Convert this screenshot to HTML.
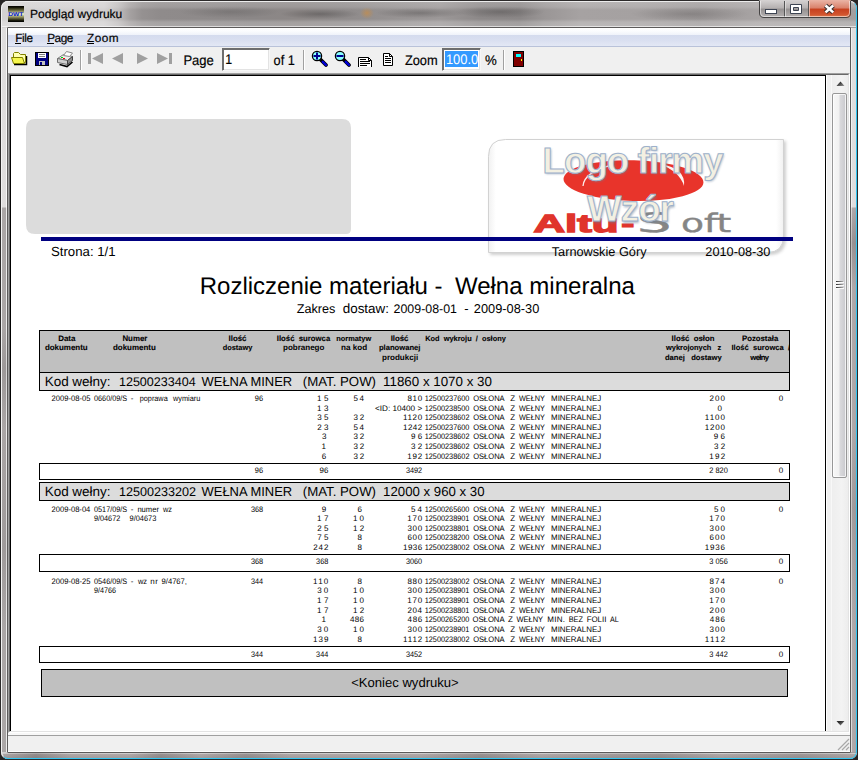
<!DOCTYPE html>
<html lang="pl"><head><meta charset="utf-8"><title>Podgląd wydruku</title>
<style>
html,body{margin:0;padding:0;width:858px;height:760px;overflow:hidden;background:#262424;font-family:"Liberation Sans",sans-serif}
div{position:absolute;box-sizing:border-box}
#win{left:0;top:0;width:858px;height:760px;border-radius:8px 8px 8px 8px;background:#2c2a2a}
#in{left:1px;top:1px;width:856px;height:758px;border-radius:7px;overflow:hidden;background:#c6c2c2}
#glass{left:-1px;top:-1px;width:858px;height:760px;
 background:
  linear-gradient(to bottom,rgba(255,255,255,0) 0px,rgba(255,255,255,0) 1px,rgba(255,255,255,.6) 1px,rgba(255,255,255,.6) 2px,rgba(255,255,255,.2) 2px,rgba(255,255,255,.14) 7px,rgba(255,255,255,0) 10px,rgba(255,255,255,0) 19px,rgba(255,255,255,.2) 22px,rgba(255,255,255,.24) 26px,rgba(255,255,255,.7) 26px,rgba(255,255,255,.7) 27px,rgba(255,255,255,0) 27px),
  radial-gradient(ellipse 7px 6px at 367px 13px,rgba(215,140,50,.55),rgba(215,140,50,0)),
  radial-gradient(ellipse 40px 5px at 320px 14px,rgba(50,48,48,.35),rgba(50,48,48,0)),
  radial-gradient(ellipse 45px 5px at 420px 13px,rgba(50,48,48,.3),rgba(50,48,48,0)),
  radial-gradient(ellipse 50px 6px at 230px 12px,rgba(60,58,58,.22),rgba(60,58,58,0)),
  radial-gradient(ellipse 45px 6px at 500px 12px,rgba(50,48,48,.3),rgba(50,48,48,0)),
  radial-gradient(ellipse 60px 7px at 690px 14px,rgba(70,66,66,.25),rgba(70,66,66,0)),
  linear-gradient(to right,#d3d1d1 0px,#d2d0d0 104px,#c0bdbd 118px,#a5a1a1 130px,#959191 142px,#8f8b8b 160px,#8e8a8a 200px,#8b8787 250px,#8c8786 300px,#8e8a8a 340px,#979393 400px,#9c9898 440px,#8c8888 480px,#8a8686 520px,#9a9696 545px,#a6a2a2 580px,#a5a1a1 640px,#9d9999 700px,#a8a4a4 760px,#a29e9e 858px)}
#frameL{left:0px;top:27px;width:6px;height:724px;background:linear-gradient(to bottom,rgba(255,255,255,.62) 0,rgba(255,255,255,.62) 179px,rgba(255,255,255,0) 180px,rgba(255,255,255,0) 300px,rgba(60,56,56,.12) 340px,rgba(255,255,255,0) 400px,rgba(60,56,56,.1) 520px,rgba(255,255,255,0) 600px),linear-gradient(to right,#f2f2f2 0,#f2f2f2 1px,#aca8a8 1px,#a8a4a4 5px,#ececec 5px)}
#frameR{left:850px;top:27px;width:6px;height:724px;background:linear-gradient(to bottom,rgba(255,255,255,.62) 0,rgba(255,255,255,.62) 179px,rgba(255,255,255,0) 180px,rgba(60,50,50,.2) 215px,rgba(255,255,255,0) 260px,rgba(255,255,255,0) 400px,rgba(60,56,56,.12) 480px,rgba(255,255,255,0) 600px),linear-gradient(to right,#dcdada 0,#dcdada 1px,#b2aaaa 1px,#aaa5a8 5px,#2fc5f2 5px)}
#frameB{left:0px;top:752px;width:856px;height:6px;background:linear-gradient(to right,rgba(60,56,56,0) 0,rgba(60,56,56,.25) 35px,rgba(60,56,56,0) 70px,rgba(60,56,56,0) 130px,rgba(60,56,56,.22) 160px,rgba(60,56,56,0) 200px,rgba(60,56,56,.2) 245px,rgba(60,56,56,0) 290px,rgba(60,56,56,0) 420px,rgba(60,56,56,.2) 480px,rgba(60,56,56,0) 540px,rgba(60,56,56,.18) 660px,rgba(60,56,56,0) 720px,rgba(60,56,56,.15) 800px,rgba(60,56,56,0) 856px),linear-gradient(to bottom,#cfcccc 0,#cfcccc 1px,#b0a9a9 1px,#a39c9c 5px,#2fc5f2 5px)}
#hl{left:0;top:0;width:856px;height:758px;border-radius:7px;border:1px solid rgba(255,255,255,.0);border-top-color:#ececec;border-left-color:#f2f2f2;border-right-color:#2fc5f2;border-bottom-color:#2fc5f2}
#cborder{left:7px;top:27px;width:844px;height:726px;border:1px solid #5c5a5a;border-radius:1px}
#client{left:8px;top:28px;width:842px;height:724px;background:#f0f0f0;overflow:hidden}
#menubar{left:0;top:0;width:842px;height:19px;background:linear-gradient(to bottom,#ffffff 0,#fbfcfe 3px,#eff2fa 7px,#d4dbee 7px,#d9dff0 12px,#e3e8f5 18px,#b9c2d9 18px,#b9c2d9 19px)}
#toolbar{left:0;top:19px;width:842px;height:26px;background:#f0f0f0}
#viewport{left:0;top:45px;width:842px;height:660px;background:#f0f0f0;border-top:1px solid #a0a0a0;border-left:1px solid #a0a0a0;border-right:1px solid #fff;border-bottom:1px solid #fff}
#vp2{left:0;top:0;width:840px;height:658px;border-top:1px solid #696969;border-left:1px solid #696969;border-right:1px solid #e3e3e3;border-bottom:1px solid #e3e3e3}
#page{left:0;top:0;width:816px;height:656px;background:#fff;border:1px solid #000;border-bottom:none}
#pgap{left:816px;top:0;width:6px;height:656px;background:linear-gradient(to right,#fff 0,#fff 1px,#f0f0f0 1px,#f0f0f0 5px,#f8f8f8 5px)}
#vscroll{left:822px;top:0;width:16px;height:656px;background:linear-gradient(to right,#eeeeee 0,#f1f1f1 40%,#f3f3f3 60%,#ededed 100%)}
#thumb{left:0px;top:18px;width:15px;height:385px;border:1px solid #979797;border-radius:2px;background:linear-gradient(to right,#f7f7f7 0,#f1f1f1 45%,#d9d9dc 55%,#c9c9cd 100%);box-shadow:inset 0 0 0 1px rgba(255,255,255,.75)}
#status{left:0;top:707px;width:842px;height:17px;background:#f0f0f0;border-top:1px solid #a0a0a0;border-bottom:1px solid #fff}
#sgap{left:0;top:705px;width:842px;height:2px;background:#f8f8f8}
.fld{background:#fff;border:1px solid #f6f6f6;border-top-color:#6e6e6e;border-left-color:#6e6e6e;box-shadow:inset 1px 1px 0 #6e6e6e, inset -1px -1px 0 #e3e3e3}
svg{position:absolute;left:0;top:0}
svg text{font-family:"Liberation Sans",sans-serif;white-space:pre;text-rendering:geometricPrecision}
svg #chrome text{stroke:#000;stroke-width:.18px}
svg #chrome text[fill]{stroke:none}
svg #report text[font-size^="7"]{stroke:#000;stroke-width:.1px}
</style></head>
<body>
<div id="win"><div id="in">
 <div id="glass"></div>
 <div id="frameL"></div><div id="frameR"></div><div id="frameB"></div>
 <div id="hl"></div>
</div></div>
<div id="cborder"></div>
<div id="client">
 <div id="menubar"></div>
 <div id="toolbar">
  <div class="fld" style="left:214px;top:1px;width:48px;height:23px"></div>
  <div class="fld" style="left:434px;top:1px;width:39px;height:23px"></div>
 </div>
 <div id="viewport"><div id="vp2">
  <div id="page"></div><div id="pgap"></div>
  <div id="vscroll"><div id="thumb"></div></div>
 </div></div>
 <div id="sgap"></div>
 <div id="status"></div>
</div>
<svg width="858" height="760" viewBox="0 0 858 760" xml:space="preserve">
<g id="chrome">
<defs>
<linearGradient id="icg" x1="0" y1="0" x2="0" y2="1"><stop offset="0" stop-color="#000"/><stop offset="0.1" stop-color="#1a1a08"/><stop offset="0.3" stop-color="#77774a"/><stop offset="0.5" stop-color="#f4f4cc"/><stop offset="0.7" stop-color="#8a8a58"/><stop offset="0.92" stop-color="#111105"/><stop offset="1" stop-color="#000"/></linearGradient>
<linearGradient id="btg" x1="0" y1="0" x2="0" y2="1"><stop offset="0" stop-color="#d6d3d3"/><stop offset="0.45" stop-color="#b4b0b0"/><stop offset="0.5" stop-color="#959191"/><stop offset="1" stop-color="#b8b4b4"/></linearGradient>
<linearGradient id="clg" x1="0" y1="0" x2="0" y2="1"><stop offset="0" stop-color="#eab5a6"/><stop offset="0.45" stop-color="#d9806a"/><stop offset="0.5" stop-color="#c6401f"/><stop offset="0.8" stop-color="#d2542e"/><stop offset="1" stop-color="#e08a5c"/></linearGradient>
<clipPath id="capclip"><path d="M759 0H851V13Q851 18 846 18H764Q759 18 759 13Z"/></clipPath>
</defs>
<!-- window icon -->
<rect x="8" y="6" width="16" height="16" fill="url(#icg)"/>
<text x="8.200" y="16" font-size="5.600" font-weight="bold" fill="#0018d0" textLength="15.200" lengthAdjust="spacingAndGlyphs">DWT</text>
<!-- title -->
<text x="30" y="17.800" font-size="12" textLength="92.300" lengthAdjust="spacing">Podgląd wydruku</text>
<!-- caption buttons -->
<g clip-path="url(#capclip)">
<rect x="759" y="0" width="50" height="18" fill="url(#btg)"/>
<rect x="809" y="0" width="42" height="18" fill="url(#clg)"/>
<rect x="784" y="1" width="1" height="17" fill="#555"/><rect x="785" y="1" width="1" height="17" fill="#e6e4e4" opacity=".7"/>
<rect x="808" y="1" width="1" height="17" fill="#555"/><rect x="809" y="1" width="1" height="17" fill="#f2c8bc" opacity=".8"/>
</g>
<path d="M759.500 0.500V13Q759.500 17.500 764 17.500H846Q850.500 17.500 850.500 13V0.500" fill="none" stroke="#454343"/>
<path d="M760.500 1V13Q760.500 16.500 764 16.500H846Q849.500 16.500 849.500 13V1" fill="none" stroke="#fff" opacity=".55"/>
<rect x="765.500" y="9.500" width="11" height="4" fill="#fff" stroke="#3d4452"/>
<path d="M790.500 4.500H801.500V13.500H790.500ZM793.500 7.500V10.500H798.500V7.500Z" fill="#fff" fill-rule="evenodd" stroke="#3d4452"/>
<path d="M825.500 5.500L833.200 12.400M833.200 5.500L825.500 12.400" stroke="#3a3030" stroke-width="4.600" fill="none"/>
<path d="M825.500 5.500L833.200 12.400M833.200 5.500L825.500 12.400" stroke="#fff" stroke-width="2.600" fill="none"/>
<!-- menu -->
<g font-size="11.800">
<text x="15.200" y="41.500" textLength="17.800" lengthAdjust="spacing">File</text>
<text x="47.300" y="41.500" textLength="25.900" lengthAdjust="spacing">Page</text>
<text x="87.100" y="41.500" textLength="31.500" lengthAdjust="spacing">Zoom</text>
</g>
<rect x="15" y="43" width="6" height="1" fill="#000"/><rect x="47" y="43" width="7" height="1" fill="#000"/><rect x="87" y="43" width="7" height="1" fill="#000"/>
<!-- toolbar icons -->
<g id="ic-open">
<path d="M26.500 56V64.500H14" fill="none" stroke="#000" stroke-width="1.500"/>
<path d="M13.500 53.500L14.500 52.500H18.500L20.500 54.500H25.500V62.500H13.500Z" fill="#ffffb0" stroke="#808000"/>
<path d="M11.500 57.500H22.500L24.500 63.500H13.500Z" fill="#f6f650" stroke="#808000"/>
</g>
<g id="ic-save">
<rect x="35.500" y="52.500" width="13" height="13" fill="#000080" stroke="#000"/>
<rect x="38" y="53" width="8" height="5" fill="#fff"/><rect x="39" y="54" width="6" height="1" fill="#808080"/><rect x="39" y="56" width="6" height="1" fill="#808080"/>
<rect x="39" y="61" width="6" height="4" fill="#c0c0c0"/><rect x="40" y="62" width="2" height="3" fill="#000080"/>
</g>
<g id="ic-print">
<path d="M59.500 64.500L67 66.500L72.500 62" fill="none" stroke="#000" stroke-width="1.600"/>
<path d="M57.500 58.500L63.500 54.500L72.500 56.500L67.500 60.500Z" fill="#ececec" stroke="#808080"/>
<path d="M57.500 58.500L67.500 60.500V64.500L57.500 62.500Z" fill="#cfcfcf" stroke="#707070"/>
<path d="M67.500 60.500L72.500 56.500V60.500L67.500 64.500Z" fill="#8c8c8c" stroke="#404040"/>
<path d="M63.500 55.500L66.500 51.500L72.500 53L69.500 56.500Z" fill="#fff" stroke="#8a8a8a"/>
<rect x="61" y="57" width="2" height="1" fill="#00d000"/><rect x="63" y="58" width="2" height="1" fill="#f00000"/>
</g>
<rect x="80" y="50" width="1" height="20" fill="#a0a0a0"/><rect x="81" y="50" width="1" height="20" fill="#fff"/>
<g fill="#a0a0a0">
<rect x="88" y="53" width="3" height="11"/><path d="M92 58.500L103 53V64Z"/>
<path d="M112 58.500L123 53V64Z"/>
<path d="M148 58.500L137 53V64Z"/>
<path d="M168 58.500L157 53V64Z"/><rect x="169" y="53" width="3" height="11"/>
</g>
<g font-size="14">
<text x="183.400" y="64.900" textLength="30.500" lengthAdjust="spacingAndGlyphs">Page</text>
<text x="225.300" y="63.900" textLength="6.900" lengthAdjust="spacingAndGlyphs">1</text>
<text x="273.600" y="64.900" textLength="21.300" lengthAdjust="spacingAndGlyphs">of 1</text>
<text x="404.900" y="64.900" textLength="32.800" lengthAdjust="spacingAndGlyphs">Zoom</text>
<text x="485" y="64.900" textLength="11.800" lengthAdjust="spacingAndGlyphs">%</text>
</g>
<rect x="303" y="50" width="1" height="20" fill="#a0a0a0"/><rect x="304" y="50" width="1" height="20" fill="#fff"/>
<g id="ic-zin">
<path d="M320 59L326 65" stroke="#000" stroke-width="3.800" stroke-linecap="round"/>
<path d="M322.800 61.800L326 65" stroke="#0000d8" stroke-width="2.400" stroke-linecap="round"/>
<circle cx="317" cy="56" r="4.600" fill="#8ff" stroke="#000" stroke-width="1.300"/>
<path d="M313.500 56H320.500M317 52.500V59.500" stroke="#000090" stroke-width="2"/>
</g>
<g id="ic-zout">
<path d="M343 59L349 65" stroke="#000" stroke-width="3.800" stroke-linecap="round"/>
<path d="M345.800 61.800L349 65" stroke="#0000d8" stroke-width="2.400" stroke-linecap="round"/>
<circle cx="340" cy="56" r="4.600" fill="#8ff" stroke="#000" stroke-width="1.300"/>
<path d="M336.500 56H343.500" stroke="#000090" stroke-width="2"/>
</g>
<g id="ic-pw">
<path d="M358.500 67V57.500H368.500L371.500 60.500V67Z" fill="#fff" stroke="none"/>
<path d="M358.500 67V57.500H368.500L371.500 60.500V67" fill="none" stroke="#000"/>
<path d="M368.500 57.500V60.500H371.500" fill="none" stroke="#000"/>
<path d="M360 59.500H366M360 61.500H370M360 63.500H370M360 65.500H367" stroke="#000"/>
</g>
<g id="ic-wp">
<path d="M383.500 53.500H389.500L392.500 56.500V65.500H383.500Z" fill="#fff" stroke="#000"/>
<path d="M389.500 53.500V56.500H392.500" fill="none" stroke="#000"/>
<path d="M385 56.500H388M385 58.500H391M385 60.500H391M385 62.500H391" stroke="#000"/>
</g>
<rect x="445" y="51" width="33" height="16" fill="#3399ff"/>
<text x="445.900" y="63.900" font-size="14" fill="#fff" textLength="32.300" lengthAdjust="spacingAndGlyphs">100.0</text>
<rect x="503" y="50" width="1" height="20" fill="#a0a0a0"/><rect x="504" y="50" width="1" height="20" fill="#fff"/>
<g id="ic-exit">
<rect x="513.500" y="51.500" width="10" height="15" fill="#800000" stroke="#000"/>
<rect x="516" y="54" width="5" height="3" fill="#00ffff"/>
<rect x="521" y="59" width="1" height="2" fill="#ffff00"/>
</g>
<!-- scrollbar arrows -->
<linearGradient id="arg" x1="0" y1="0" x2="1" y2="1"><stop offset="0.3" stop-color="#2c2c2c"/><stop offset="1" stop-color="#9a9a9a"/></linearGradient>
<path d="M840.500 81.500L844.500 86H836.500Z" fill="url(#arg)"/>
<path d="M836.500 721H844.500L840.500 725.500Z" fill="url(#arg)"/>
<linearGradient id="grg" x1="0" y1="0" x2="1" y2="0"><stop offset="0" stop-color="#303030"/><stop offset="1" stop-color="#a8a8a8"/></linearGradient>
<g fill="#fff" opacity=".9"><rect x="836" y="282" width="8" height="1"/><rect x="836" y="285" width="8" height="1"/><rect x="836" y="288" width="8" height="1"/></g>
<g fill="url(#grg)"><rect x="836" y="281" width="7" height="1"/><rect x="836" y="284" width="7" height="1"/><rect x="836" y="287" width="7" height="1"/></g>
<!-- size grip -->
<g stroke="#a8a8a8" stroke-width="1.200"><path d="M838 750L849 739M842 750L849 743M846 750L849 747"/></g>

</g>
<g id="report">
<path d="M35 119H342Q351 119 351 128V229Q351 234 346 234H35Q26 234 26 225V128Q26 119 35 119Z" fill="#dcdcdc"/>
<defs>
<filter id="lsh" x="-10%" y="-10%" width="125%" height="125%"><feGaussianBlur stdDeviation="1.8"/></filter>
<filter id="tsh" x="-10%" y="-20%" width="120%" height="150%"><feGaussianBlur stdDeviation="1.2"/></filter>
<linearGradient id="cardg" x1="0" y1="0" x2="1" y2="0"><stop offset="0" stop-color="#f1f1f1"/><stop offset="0.025" stop-color="#fff"/><stop offset="0.975" stop-color="#fff"/><stop offset="1" stop-color="#f1f1f1"/></linearGradient>
</defs>
<path d="M507 141H786V238Q786 255 769 255H490V158Q490 141 507 141Z" fill="#666" opacity="0.3" filter="url(#lsh)"/>
<path d="M505.500 139.500H783.500V236Q783.500 252.500 767 252.500H488.500V156.500Q488.500 139.500 505.500 139.500Z" fill="url(#cardg)" stroke="#d2d2d2"/>
<ellipse cx="633.5" cy="180.600" rx="70" ry="20.300" fill="#e8342b" transform="rotate(1.5 633.5 180)"/>
<path d="M583 186Q584 172 612 165" fill="none" stroke="#fff" stroke-width="1.3" opacity="0.9"/>
<path d="M660 164Q686 168 684 186Q680 172 660 164Z" fill="#fff" opacity="0.95"/>
<text x="533.500" y="231.500" font-size="25" font-weight="bold" fill="#e0342c" stroke="#e0342c" stroke-width="1.300" textLength="85" lengthAdjust="spacingAndGlyphs">Altu</text>
<text x="621" y="231.500" font-size="25" font-weight="bold" fill="#e0342c" stroke="#e0342c" stroke-width="1" textLength="13.500" lengthAdjust="spacingAndGlyphs">-</text>
<text x="0" y="0" style="font-family:'DejaVu Sans',sans-serif" font-size="27" fill="#858585" stroke="#858585" stroke-width=".4" transform="translate(637 231.500) scale(2 1)">S</text>
<text x="0" y="0" style="font-family:'DejaVu Sans',sans-serif" font-size="25.600" fill="#858585" stroke="#858585" stroke-width=".4" transform="translate(681 231.500) scale(1.47 1)" >oft</text>
<g font-size="36.500" font-weight="bold" font-family="'Liberation Sans', sans-serif">
<text x="543.500" y="173.800" fill="#6a7f9a" opacity="0.55" filter="url(#tsh)" textLength="181" lengthAdjust="spacing">Logo firmy</text>
<text x="588" y="222.500" fill="#6a7f9a" opacity="0.55" filter="url(#tsh)" textLength="87" lengthAdjust="spacing">Wzór</text>
<text x="542.500" y="172.600" fill="#f3f0e2" stroke="#9db1cb" stroke-width="1" textLength="181" lengthAdjust="spacing">Logo firmy</text>
<text x="587" y="221.300" fill="#f3f0e2" stroke="#9db1cb" stroke-width="1" textLength="87" lengthAdjust="spacing">Wzór</text>
</g>

<rect x="41" y="237" width="752" height="4" fill="#000080"/>
<text x="50.90" y="256.00" font-size="13.24">Strona: 1/1</text>
<text x="551.71" y="256.00" font-size="12.74">Tarnowskie Góry</text>
<text x="705.36" y="256.00" font-size="12.73">2010-08-30</text>
<text x="199.73" y="294.00" font-size="24.01">Rozliczenie materiału -</text>
<text x="454.89" y="294.00" font-size="24.06">Wełna mineralna</text>
<text x="296.70" y="313.00" font-size="12.65">Zakres</text>
<text x="342.74" y="313.00" font-size="13.43">dostaw:</text>
<text x="393.58" y="313.00" font-size="12.4">2009-08-01</text>
<text x="464.22" y="313.00" font-size="13">-</text>
<text x="473.86" y="313.00" font-size="12.81">2009-08-30</text>
<rect x="39.5" y="330.5" width="750" height="42" fill="#c0c0c0" stroke="#000"/>
<text x="66.80" y="341.00" font-size="7.97" text-anchor="middle" font-weight="bold">Data</text>
<text x="66.30" y="350.00" font-size="7.95" text-anchor="middle" font-weight="bold">dokumentu</text>
<text x="134.90" y="341.00" font-size="7.88" text-anchor="middle" font-weight="bold">Numer</text>
<text x="134.40" y="350.00" font-size="7.95" text-anchor="middle" font-weight="bold">dokumentu</text>
<text x="237.50" y="341.00" font-size="7.88" text-anchor="middle" font-weight="bold">Ilość</text>
<text x="237.50" y="350.00" font-size="7.41" text-anchor="middle" font-weight="bold">dostawy</text>
<text x="303.50" y="341.00" font-size="7.76" text-anchor="middle" font-weight="bold">Ilość  surowca</text>
<text x="303.70" y="350.00" font-size="8.02" text-anchor="middle" font-weight="bold">pobranego</text>
<text x="353.70" y="341.00" font-size="7.4" text-anchor="middle" font-weight="bold">normatyw</text>
<text x="354.10" y="350.00" font-size="8.12" text-anchor="middle" font-weight="bold">na kod</text>
<text x="399.50" y="341.00" font-size="7.79" text-anchor="middle" font-weight="bold">Ilość</text>
<text x="399.70" y="350.00" font-size="7.65" text-anchor="middle" font-weight="bold">planowanej</text>
<text x="400.10" y="359.50" font-size="8.04" text-anchor="middle" font-weight="bold">produkcji</text>
<text x="425.20" y="341.00" font-size="7.42" font-weight="bold">Kod  wykroju  /  osłony</text>
<text x="693.00" y="341.00" font-size="7.8" text-anchor="middle" font-weight="bold">Ilość  osłon</text>
<text x="693.60" y="350.00" font-size="7.42" text-anchor="middle" font-weight="bold">wykrojonych   z</text>
<text x="693.30" y="359.50" font-size="7.61" text-anchor="middle" font-weight="bold">danej   dostawy</text>
<text x="760.10" y="341.00" font-size="7.77" text-anchor="middle" font-weight="bold">Pozostała</text>
<clipPath id="hc"><rect x="40" y="331" width="749" height="41"/></clipPath>
<text x="731.49" y="350.00" font-size="7.58" font-weight="bold" clip-path="url(#hc)">Ilość  surowca  /</text>
<text x="759.70" y="359.50" font-size="7.7" text-anchor="middle" textLength="18.72" lengthAdjust="spacing" font-weight="bold">wełny</text>
<rect x="39.5" y="372.5" width="750" height="18" fill="#dcdcdc" stroke="#000"/>
<text x="44.70" y="385.70" font-size="13.46">Kod wełny:</text>
<text x="118.94" y="385.70" font-size="12.56">12500233404</text>
<text x="201.54" y="385.70" font-size="12.96">WEŁNA MINER</text>
<text x="302.78" y="385.70" font-size="13.24">(MAT. POW)</text>
<text x="383.08" y="385.70" font-size="13.35">11860 x 1070 x 30</text>
<text x="51.52" y="400.90" font-size="8" textLength="38.90" lengthAdjust="spacingAndGlyphs">2009-08-05</text>
<text x="94.02" y="400.90" font-size="8" textLength="33.22" lengthAdjust="spacingAndGlyphs">0660/09/S</text>
<text x="130.64" y="400.90" font-size="8">-</text>
<text x="139.73" y="400.90" font-size="8" textLength="27.97" lengthAdjust="spacingAndGlyphs">poprawa</text>
<text x="173.01" y="400.90" font-size="8" textLength="27.38" lengthAdjust="spacingAndGlyphs">wymiaru</text>
<text x="254.85" y="400.90" font-size="8" textLength="8.28" lengthAdjust="spacingAndGlyphs">96</text>
<text x="316.99" y="400.90" font-size="8" textLength="11.35" lengthAdjust="spacing">15</text>
<text x="353.38" y="400.90" font-size="8" textLength="10.55" lengthAdjust="spacing">54</text>
<text x="407.45" y="400.90" font-size="8" textLength="14.66" lengthAdjust="spacing">810</text>
<text x="424.74" y="400.90" font-size="8" textLength="44.64" lengthAdjust="spacingAndGlyphs">12500237600</text>
<text x="473.24" y="400.90" font-size="8" textLength="31.37" lengthAdjust="spacingAndGlyphs">OSŁONA</text>
<text x="510.15" y="400.90" font-size="8">Z</text>
<text x="518.97" y="400.90" font-size="8" textLength="25.89" lengthAdjust="spacingAndGlyphs">WEŁNY</text>
<text x="551.05" y="400.90" font-size="8" textLength="50.14" lengthAdjust="spacingAndGlyphs">MINERALNEJ</text>
<text x="709.50" y="400.90" font-size="8" textLength="15.51" lengthAdjust="spacing">200</text>
<text x="316.99" y="410.53" font-size="8" textLength="11.36" lengthAdjust="spacing">13</text>
<text x="375.00" y="410.53" font-size="8" textLength="47.20" lengthAdjust="spacingAndGlyphs">&lt;ID: 10400 &gt;</text>
<text x="424.74" y="410.53" font-size="8" textLength="44.64" lengthAdjust="spacingAndGlyphs">12500238500</text>
<text x="473.24" y="410.53" font-size="8" textLength="31.37" lengthAdjust="spacingAndGlyphs">OSŁONA</text>
<text x="510.15" y="410.53" font-size="8">Z</text>
<text x="518.97" y="410.53" font-size="8" textLength="25.89" lengthAdjust="spacingAndGlyphs">WEŁNY</text>
<text x="551.05" y="410.53" font-size="8" textLength="50.14" lengthAdjust="spacingAndGlyphs">MINERALNEJ</text>
<text x="717.39" y="410.53" font-size="8">0</text>
<text x="317.30" y="420.16" font-size="8" textLength="11.04" lengthAdjust="spacing">35</text>
<text x="353.40" y="420.16" font-size="8" textLength="10.71" lengthAdjust="spacing">32</text>
<text x="402.99" y="420.16" font-size="8" textLength="19.12" lengthAdjust="spacing">1120</text>
<text x="424.74" y="420.16" font-size="8" textLength="44.72" lengthAdjust="spacingAndGlyphs">12500238602</text>
<text x="473.24" y="420.16" font-size="8" textLength="31.37" lengthAdjust="spacingAndGlyphs">OSŁONA</text>
<text x="510.15" y="420.16" font-size="8">Z</text>
<text x="518.97" y="420.16" font-size="8" textLength="25.89" lengthAdjust="spacingAndGlyphs">WEŁNY</text>
<text x="551.05" y="420.16" font-size="8" textLength="50.14" lengthAdjust="spacingAndGlyphs">MINERALNEJ</text>
<text x="704.79" y="420.16" font-size="8" textLength="20.22" lengthAdjust="spacing">1100</text>
<text x="317.20" y="429.79" font-size="8" textLength="11.15" lengthAdjust="spacing">23</text>
<text x="353.38" y="429.79" font-size="8" textLength="10.55" lengthAdjust="spacing">54</text>
<text x="402.99" y="429.79" font-size="8" textLength="19.21" lengthAdjust="spacing">1242</text>
<text x="424.74" y="429.79" font-size="8" textLength="44.64" lengthAdjust="spacingAndGlyphs">12500237600</text>
<text x="473.24" y="429.79" font-size="8" textLength="31.37" lengthAdjust="spacingAndGlyphs">OSŁONA</text>
<text x="510.15" y="429.79" font-size="8">Z</text>
<text x="518.97" y="429.79" font-size="8" textLength="25.89" lengthAdjust="spacingAndGlyphs">WEŁNY</text>
<text x="551.05" y="429.79" font-size="8" textLength="50.14" lengthAdjust="spacingAndGlyphs">MINERALNEJ</text>
<text x="704.79" y="429.79" font-size="8" textLength="20.22" lengthAdjust="spacing">1200</text>
<text x="321.90" y="439.42" font-size="8">3</text>
<text x="353.40" y="439.42" font-size="8" textLength="10.71" lengthAdjust="spacing">32</text>
<text x="410.93" y="439.42" font-size="8" textLength="11.23" lengthAdjust="spacing">96</text>
<text x="424.74" y="439.42" font-size="8" textLength="44.72" lengthAdjust="spacingAndGlyphs">12500238602</text>
<text x="473.24" y="439.42" font-size="8" textLength="31.37" lengthAdjust="spacingAndGlyphs">OSŁONA</text>
<text x="510.15" y="439.42" font-size="8">Z</text>
<text x="518.97" y="439.42" font-size="8" textLength="25.89" lengthAdjust="spacingAndGlyphs">WEŁNY</text>
<text x="551.05" y="439.42" font-size="8" textLength="50.14" lengthAdjust="spacingAndGlyphs">MINERALNEJ</text>
<text x="713.83" y="439.42" font-size="8" textLength="11.23" lengthAdjust="spacing">96</text>
<text x="321.59" y="449.05" font-size="8">1</text>
<text x="353.40" y="449.05" font-size="8" textLength="10.71" lengthAdjust="spacing">32</text>
<text x="411.00" y="449.05" font-size="8" textLength="11.21" lengthAdjust="spacing">32</text>
<text x="424.74" y="449.05" font-size="8" textLength="44.72" lengthAdjust="spacingAndGlyphs">12500238602</text>
<text x="473.24" y="449.05" font-size="8" textLength="31.37" lengthAdjust="spacingAndGlyphs">OSŁONA</text>
<text x="510.15" y="449.05" font-size="8">Z</text>
<text x="518.97" y="449.05" font-size="8" textLength="25.89" lengthAdjust="spacingAndGlyphs">WEŁNY</text>
<text x="551.05" y="449.05" font-size="8" textLength="50.14" lengthAdjust="spacingAndGlyphs">MINERALNEJ</text>
<text x="713.90" y="449.05" font-size="8" textLength="11.21" lengthAdjust="spacing">32</text>
<text x="321.79" y="458.68" font-size="8">6</text>
<text x="353.40" y="458.68" font-size="8" textLength="10.71" lengthAdjust="spacing">32</text>
<text x="407.19" y="458.68" font-size="8" textLength="15.01" lengthAdjust="spacing">192</text>
<text x="424.74" y="458.68" font-size="8" textLength="44.72" lengthAdjust="spacingAndGlyphs">12500238602</text>
<text x="473.24" y="458.68" font-size="8" textLength="31.37" lengthAdjust="spacingAndGlyphs">OSŁONA</text>
<text x="510.15" y="458.68" font-size="8">Z</text>
<text x="518.97" y="458.68" font-size="8" textLength="25.89" lengthAdjust="spacingAndGlyphs">WEŁNY</text>
<text x="551.05" y="458.68" font-size="8" textLength="50.14" lengthAdjust="spacingAndGlyphs">MINERALNEJ</text>
<text x="709.29" y="458.68" font-size="8" textLength="15.81" lengthAdjust="spacing">192</text>
<text x="778.69" y="400.90" font-size="8">0</text>
<rect x="39.5" y="463.5" width="750" height="16" fill="#fff" stroke="#000"/>
<text x="254.85" y="473.20" font-size="8" textLength="8.28" lengthAdjust="spacingAndGlyphs">96</text>
<text x="319.53" y="473.20" font-size="8" textLength="8.82" lengthAdjust="spacingAndGlyphs">96</text>
<text x="405.92" y="473.20" font-size="8" textLength="16.25" lengthAdjust="spacingAndGlyphs">3492</text>
<text x="709.23" y="473.20" font-size="8" textLength="18.56" lengthAdjust="spacingAndGlyphs">2 820</text>
<text x="778.69" y="473.20" font-size="8">0</text>
<rect x="39.5" y="482.5" width="750" height="18" fill="#dcdcdc" stroke="#000"/>
<text x="44.70" y="495.70" font-size="13.46">Kod wełny:</text>
<text x="118.94" y="495.70" font-size="12.6">12500233202</text>
<text x="201.54" y="495.70" font-size="12.96">WEŁNA MINER</text>
<text x="302.78" y="495.70" font-size="13.24">(MAT. POW)</text>
<text x="383.09" y="495.70" font-size="13.22">12000 x 960 x 30</text>
<text x="51.52" y="511.50" font-size="8" textLength="38.80" lengthAdjust="spacingAndGlyphs">2009-08-04</text>
<text x="94.02" y="511.50" font-size="8" textLength="33.22" lengthAdjust="spacingAndGlyphs">0517/09/S</text>
<text x="130.64" y="511.50" font-size="8">-</text>
<text x="137.40" y="511.50" font-size="8" textLength="21.53" lengthAdjust="spacingAndGlyphs">numer</text>
<text x="163.01" y="511.50" font-size="8" textLength="9.06" lengthAdjust="spacingAndGlyphs">wz</text>
<text x="93.96" y="521.13" font-size="8" textLength="26.31" lengthAdjust="spacingAndGlyphs">9/04672</text>
<text x="129.55" y="521.13" font-size="8" textLength="26.77" lengthAdjust="spacingAndGlyphs">9/04673</text>
<text x="250.92" y="511.50" font-size="8" textLength="12.20" lengthAdjust="spacingAndGlyphs">368</text>
<text x="321.82" y="511.50" font-size="8">9</text>
<text x="357.49" y="511.50" font-size="8">6</text>
<text x="410.98" y="511.50" font-size="8" textLength="11.05" lengthAdjust="spacing">54</text>
<text x="424.74" y="511.50" font-size="8" textLength="44.64" lengthAdjust="spacingAndGlyphs">12500265600</text>
<text x="473.24" y="511.50" font-size="8" textLength="31.37" lengthAdjust="spacingAndGlyphs">OSŁONA</text>
<text x="510.15" y="511.50" font-size="8">Z</text>
<text x="518.97" y="511.50" font-size="8" textLength="25.89" lengthAdjust="spacingAndGlyphs">WEŁNY</text>
<text x="551.05" y="511.50" font-size="8" textLength="50.14" lengthAdjust="spacingAndGlyphs">MINERALNEJ</text>
<text x="713.88" y="511.50" font-size="8" textLength="11.13" lengthAdjust="spacing">50</text>
<text x="316.99" y="521.13" font-size="8" textLength="11.41" lengthAdjust="spacing">17</text>
<text x="353.09" y="521.13" font-size="8" textLength="10.92" lengthAdjust="spacing">10</text>
<text x="407.19" y="521.13" font-size="8" textLength="14.92" lengthAdjust="spacing">170</text>
<text x="424.74" y="521.13" font-size="8" textLength="44.71" lengthAdjust="spacingAndGlyphs">12500238901</text>
<text x="473.24" y="521.13" font-size="8" textLength="31.37" lengthAdjust="spacingAndGlyphs">OSŁONA</text>
<text x="510.15" y="521.13" font-size="8">Z</text>
<text x="518.97" y="521.13" font-size="8" textLength="25.89" lengthAdjust="spacingAndGlyphs">WEŁNY</text>
<text x="551.05" y="521.13" font-size="8" textLength="50.14" lengthAdjust="spacingAndGlyphs">MINERALNEJ</text>
<text x="709.29" y="521.13" font-size="8" textLength="15.72" lengthAdjust="spacing">170</text>
<text x="317.20" y="530.76" font-size="8" textLength="11.14" lengthAdjust="spacing">25</text>
<text x="353.09" y="530.76" font-size="8" textLength="11.01" lengthAdjust="spacing">12</text>
<text x="407.50" y="530.76" font-size="8" textLength="14.62" lengthAdjust="spacing">300</text>
<text x="424.74" y="530.76" font-size="8" textLength="44.71" lengthAdjust="spacingAndGlyphs">12500238801</text>
<text x="473.24" y="530.76" font-size="8" textLength="31.37" lengthAdjust="spacingAndGlyphs">OSŁONA</text>
<text x="510.15" y="530.76" font-size="8">Z</text>
<text x="518.97" y="530.76" font-size="8" textLength="25.89" lengthAdjust="spacingAndGlyphs">WEŁNY</text>
<text x="551.05" y="530.76" font-size="8" textLength="50.14" lengthAdjust="spacingAndGlyphs">MINERALNEJ</text>
<text x="709.60" y="530.76" font-size="8" textLength="15.42" lengthAdjust="spacing">300</text>
<text x="317.19" y="540.39" font-size="8" textLength="11.15" lengthAdjust="spacing">75</text>
<text x="357.55" y="540.39" font-size="8">8</text>
<text x="407.39" y="540.39" font-size="8" textLength="14.72" lengthAdjust="spacing">600</text>
<text x="424.74" y="540.39" font-size="8" textLength="44.64" lengthAdjust="spacingAndGlyphs">12500238200</text>
<text x="473.24" y="540.39" font-size="8" textLength="31.37" lengthAdjust="spacingAndGlyphs">OSŁONA</text>
<text x="510.15" y="540.39" font-size="8">Z</text>
<text x="518.97" y="540.39" font-size="8" textLength="25.89" lengthAdjust="spacingAndGlyphs">WEŁNY</text>
<text x="551.05" y="540.39" font-size="8" textLength="50.14" lengthAdjust="spacingAndGlyphs">MINERALNEJ</text>
<text x="709.49" y="540.39" font-size="8" textLength="15.52" lengthAdjust="spacing">600</text>
<text x="313.20" y="550.02" font-size="8" textLength="15.20" lengthAdjust="spacing">242</text>
<text x="357.55" y="550.02" font-size="8">8</text>
<text x="402.99" y="550.02" font-size="8" textLength="19.16" lengthAdjust="spacing">1936</text>
<text x="424.74" y="550.02" font-size="8" textLength="44.72" lengthAdjust="spacingAndGlyphs">12500238002</text>
<text x="473.24" y="550.02" font-size="8" textLength="31.37" lengthAdjust="spacingAndGlyphs">OSŁONA</text>
<text x="510.15" y="550.02" font-size="8">Z</text>
<text x="518.97" y="550.02" font-size="8" textLength="25.89" lengthAdjust="spacingAndGlyphs">WEŁNY</text>
<text x="551.05" y="550.02" font-size="8" textLength="50.14" lengthAdjust="spacingAndGlyphs">MINERALNEJ</text>
<text x="704.79" y="550.02" font-size="8" textLength="20.26" lengthAdjust="spacing">1936</text>
<text x="778.69" y="511.50" font-size="8">0</text>
<rect x="39.5" y="554.5" width="750" height="17" fill="#fff" stroke="#000"/>
<text x="250.92" y="564.20" font-size="8" textLength="12.20" lengthAdjust="spacingAndGlyphs">368</text>
<text x="316.12" y="564.20" font-size="8" textLength="12.20" lengthAdjust="spacingAndGlyphs">368</text>
<text x="405.92" y="564.20" font-size="8" textLength="16.16" lengthAdjust="spacingAndGlyphs">3060</text>
<text x="709.32" y="564.20" font-size="8" textLength="18.51" lengthAdjust="spacingAndGlyphs">3 056</text>
<text x="778.69" y="564.20" font-size="8">0</text>
<text x="51.52" y="583.80" font-size="8" textLength="38.90" lengthAdjust="spacingAndGlyphs">2009-08-25</text>
<text x="94.02" y="583.80" font-size="8" textLength="33.22" lengthAdjust="spacingAndGlyphs">0546/09/S</text>
<text x="130.64" y="583.80" font-size="8">-</text>
<text x="137.91" y="583.80" font-size="8" textLength="9.16" lengthAdjust="spacingAndGlyphs">wz</text>
<text x="150.37" y="583.80" font-size="8" textLength="7.46" lengthAdjust="spacing">nr</text>
<text x="161.54" y="583.80" font-size="8" textLength="25.44" lengthAdjust="spacingAndGlyphs">9/4767,</text>
<text x="93.96" y="593.43" font-size="8" textLength="22.05" lengthAdjust="spacingAndGlyphs">9/4766</text>
<text x="250.92" y="583.80" font-size="8" textLength="12.09" lengthAdjust="spacingAndGlyphs">344</text>
<text x="312.99" y="583.80" font-size="8" textLength="15.32" lengthAdjust="spacing">110</text>
<text x="357.55" y="583.80" font-size="8">8</text>
<text x="407.45" y="583.80" font-size="8" textLength="14.66" lengthAdjust="spacing">880</text>
<text x="424.74" y="583.80" font-size="8" textLength="44.72" lengthAdjust="spacingAndGlyphs">12500238002</text>
<text x="473.24" y="583.80" font-size="8" textLength="31.37" lengthAdjust="spacingAndGlyphs">OSŁONA</text>
<text x="510.15" y="583.80" font-size="8">Z</text>
<text x="518.97" y="583.80" font-size="8" textLength="25.89" lengthAdjust="spacingAndGlyphs">WEŁNY</text>
<text x="551.05" y="583.80" font-size="8" textLength="50.14" lengthAdjust="spacingAndGlyphs">MINERALNEJ</text>
<text x="709.55" y="583.80" font-size="8" textLength="15.38" lengthAdjust="spacing">874</text>
<text x="317.30" y="593.43" font-size="8" textLength="11.02" lengthAdjust="spacing">30</text>
<text x="353.09" y="593.43" font-size="8" textLength="10.92" lengthAdjust="spacing">10</text>
<text x="407.50" y="593.43" font-size="8" textLength="14.62" lengthAdjust="spacing">300</text>
<text x="424.74" y="593.43" font-size="8" textLength="44.71" lengthAdjust="spacingAndGlyphs">12500238901</text>
<text x="473.24" y="593.43" font-size="8" textLength="31.37" lengthAdjust="spacingAndGlyphs">OSŁONA</text>
<text x="510.15" y="593.43" font-size="8">Z</text>
<text x="518.97" y="593.43" font-size="8" textLength="25.89" lengthAdjust="spacingAndGlyphs">WEŁNY</text>
<text x="551.05" y="593.43" font-size="8" textLength="50.14" lengthAdjust="spacingAndGlyphs">MINERALNEJ</text>
<text x="709.60" y="593.43" font-size="8" textLength="15.42" lengthAdjust="spacing">300</text>
<text x="316.99" y="603.06" font-size="8" textLength="11.41" lengthAdjust="spacing">17</text>
<text x="353.09" y="603.06" font-size="8" textLength="10.92" lengthAdjust="spacing">10</text>
<text x="407.19" y="603.06" font-size="8" textLength="14.92" lengthAdjust="spacing">170</text>
<text x="424.74" y="603.06" font-size="8" textLength="44.71" lengthAdjust="spacingAndGlyphs">12500238901</text>
<text x="473.24" y="603.06" font-size="8" textLength="31.37" lengthAdjust="spacingAndGlyphs">OSŁONA</text>
<text x="510.15" y="603.06" font-size="8">Z</text>
<text x="518.97" y="603.06" font-size="8" textLength="25.89" lengthAdjust="spacingAndGlyphs">WEŁNY</text>
<text x="551.05" y="603.06" font-size="8" textLength="50.14" lengthAdjust="spacingAndGlyphs">MINERALNEJ</text>
<text x="709.29" y="603.06" font-size="8" textLength="15.72" lengthAdjust="spacing">170</text>
<text x="316.99" y="612.69" font-size="8" textLength="11.41" lengthAdjust="spacing">17</text>
<text x="353.09" y="612.69" font-size="8" textLength="11.01" lengthAdjust="spacing">12</text>
<text x="407.40" y="612.69" font-size="8" textLength="14.64" lengthAdjust="spacing">204</text>
<text x="424.74" y="612.69" font-size="8" textLength="44.71" lengthAdjust="spacingAndGlyphs">12500238801</text>
<text x="473.24" y="612.69" font-size="8" textLength="31.37" lengthAdjust="spacingAndGlyphs">OSŁONA</text>
<text x="510.15" y="612.69" font-size="8">Z</text>
<text x="518.97" y="612.69" font-size="8" textLength="25.89" lengthAdjust="spacingAndGlyphs">WEŁNY</text>
<text x="551.05" y="612.69" font-size="8" textLength="50.14" lengthAdjust="spacingAndGlyphs">MINERALNEJ</text>
<text x="709.50" y="612.69" font-size="8" textLength="15.51" lengthAdjust="spacing">200</text>
<text x="321.59" y="622.32" font-size="8">1</text>
<text x="350.02" y="622.32" font-size="8" textLength="14.04" lengthAdjust="spacing">486</text>
<text x="407.62" y="622.32" font-size="8" textLength="14.54" lengthAdjust="spacing">486</text>
<text x="424.74" y="622.32" font-size="8" textLength="44.64" lengthAdjust="spacingAndGlyphs">12500265200</text>
<text x="472.54" y="622.32" font-size="8" textLength="31.98" lengthAdjust="spacingAndGlyphs">OSŁONA</text>
<text x="508.05" y="622.32" font-size="8">Z</text>
<text x="516.47" y="622.32" font-size="8" textLength="26.60" lengthAdjust="spacingAndGlyphs">WEŁNY</text>
<text x="547.34" y="622.32" font-size="8" textLength="17.59" lengthAdjust="spacing">MIN.</text>
<text x="568.70" y="622.32" font-size="8" textLength="14.23" lengthAdjust="spacingAndGlyphs">BEZ</text>
<text x="586.65" y="622.32" font-size="8" textLength="19.78" lengthAdjust="spacingAndGlyphs">FOLII</text>
<text x="610.09" y="622.32" font-size="8" textLength="8.75" lengthAdjust="spacingAndGlyphs">AL</text>
<text x="709.72" y="622.32" font-size="8" textLength="15.34" lengthAdjust="spacing">486</text>
<text x="317.30" y="631.95" font-size="8" textLength="11.02" lengthAdjust="spacing">30</text>
<text x="353.09" y="631.95" font-size="8" textLength="10.92" lengthAdjust="spacing">10</text>
<text x="407.50" y="631.95" font-size="8" textLength="14.62" lengthAdjust="spacing">300</text>
<text x="424.74" y="631.95" font-size="8" textLength="44.71" lengthAdjust="spacingAndGlyphs">12500238901</text>
<text x="473.24" y="631.95" font-size="8" textLength="31.37" lengthAdjust="spacingAndGlyphs">OSŁONA</text>
<text x="510.15" y="631.95" font-size="8">Z</text>
<text x="518.97" y="631.95" font-size="8" textLength="25.89" lengthAdjust="spacingAndGlyphs">WEŁNY</text>
<text x="551.05" y="631.95" font-size="8" textLength="50.14" lengthAdjust="spacingAndGlyphs">MINERALNEJ</text>
<text x="709.60" y="631.95" font-size="8" textLength="15.42" lengthAdjust="spacing">300</text>
<text x="312.99" y="641.58" font-size="8" textLength="15.39" lengthAdjust="spacing">139</text>
<text x="357.55" y="641.58" font-size="8">8</text>
<text x="402.99" y="641.58" font-size="8" textLength="19.21" lengthAdjust="spacing">1112</text>
<text x="424.74" y="641.58" font-size="8" textLength="44.72" lengthAdjust="spacingAndGlyphs">12500238002</text>
<text x="473.24" y="641.58" font-size="8" textLength="31.37" lengthAdjust="spacingAndGlyphs">OSŁONA</text>
<text x="510.15" y="641.58" font-size="8">Z</text>
<text x="518.97" y="641.58" font-size="8" textLength="25.89" lengthAdjust="spacingAndGlyphs">WEŁNY</text>
<text x="551.05" y="641.58" font-size="8" textLength="50.14" lengthAdjust="spacingAndGlyphs">MINERALNEJ</text>
<text x="704.79" y="641.58" font-size="8" textLength="20.31" lengthAdjust="spacing">1112</text>
<text x="778.69" y="583.80" font-size="8">0</text>
<rect x="39.5" y="646.5" width="750" height="16" fill="#fff" stroke="#000"/>
<text x="250.92" y="656.80" font-size="8" textLength="12.09" lengthAdjust="spacingAndGlyphs">344</text>
<text x="316.12" y="656.80" font-size="8" textLength="12.09" lengthAdjust="spacingAndGlyphs">344</text>
<text x="405.92" y="656.80" font-size="8" textLength="16.25" lengthAdjust="spacingAndGlyphs">3452</text>
<text x="709.32" y="656.80" font-size="8" textLength="18.56" lengthAdjust="spacingAndGlyphs">3 442</text>
<text x="778.69" y="656.80" font-size="8">0</text>
<rect x="41.5" y="669.5" width="746" height="27" fill="#c0c0c0" stroke="#000"/>
<text x="351.15" y="687.30" font-size="13.08">&lt;Koniec wydruku&gt;</text>
</g>
</svg>
</body></html>
